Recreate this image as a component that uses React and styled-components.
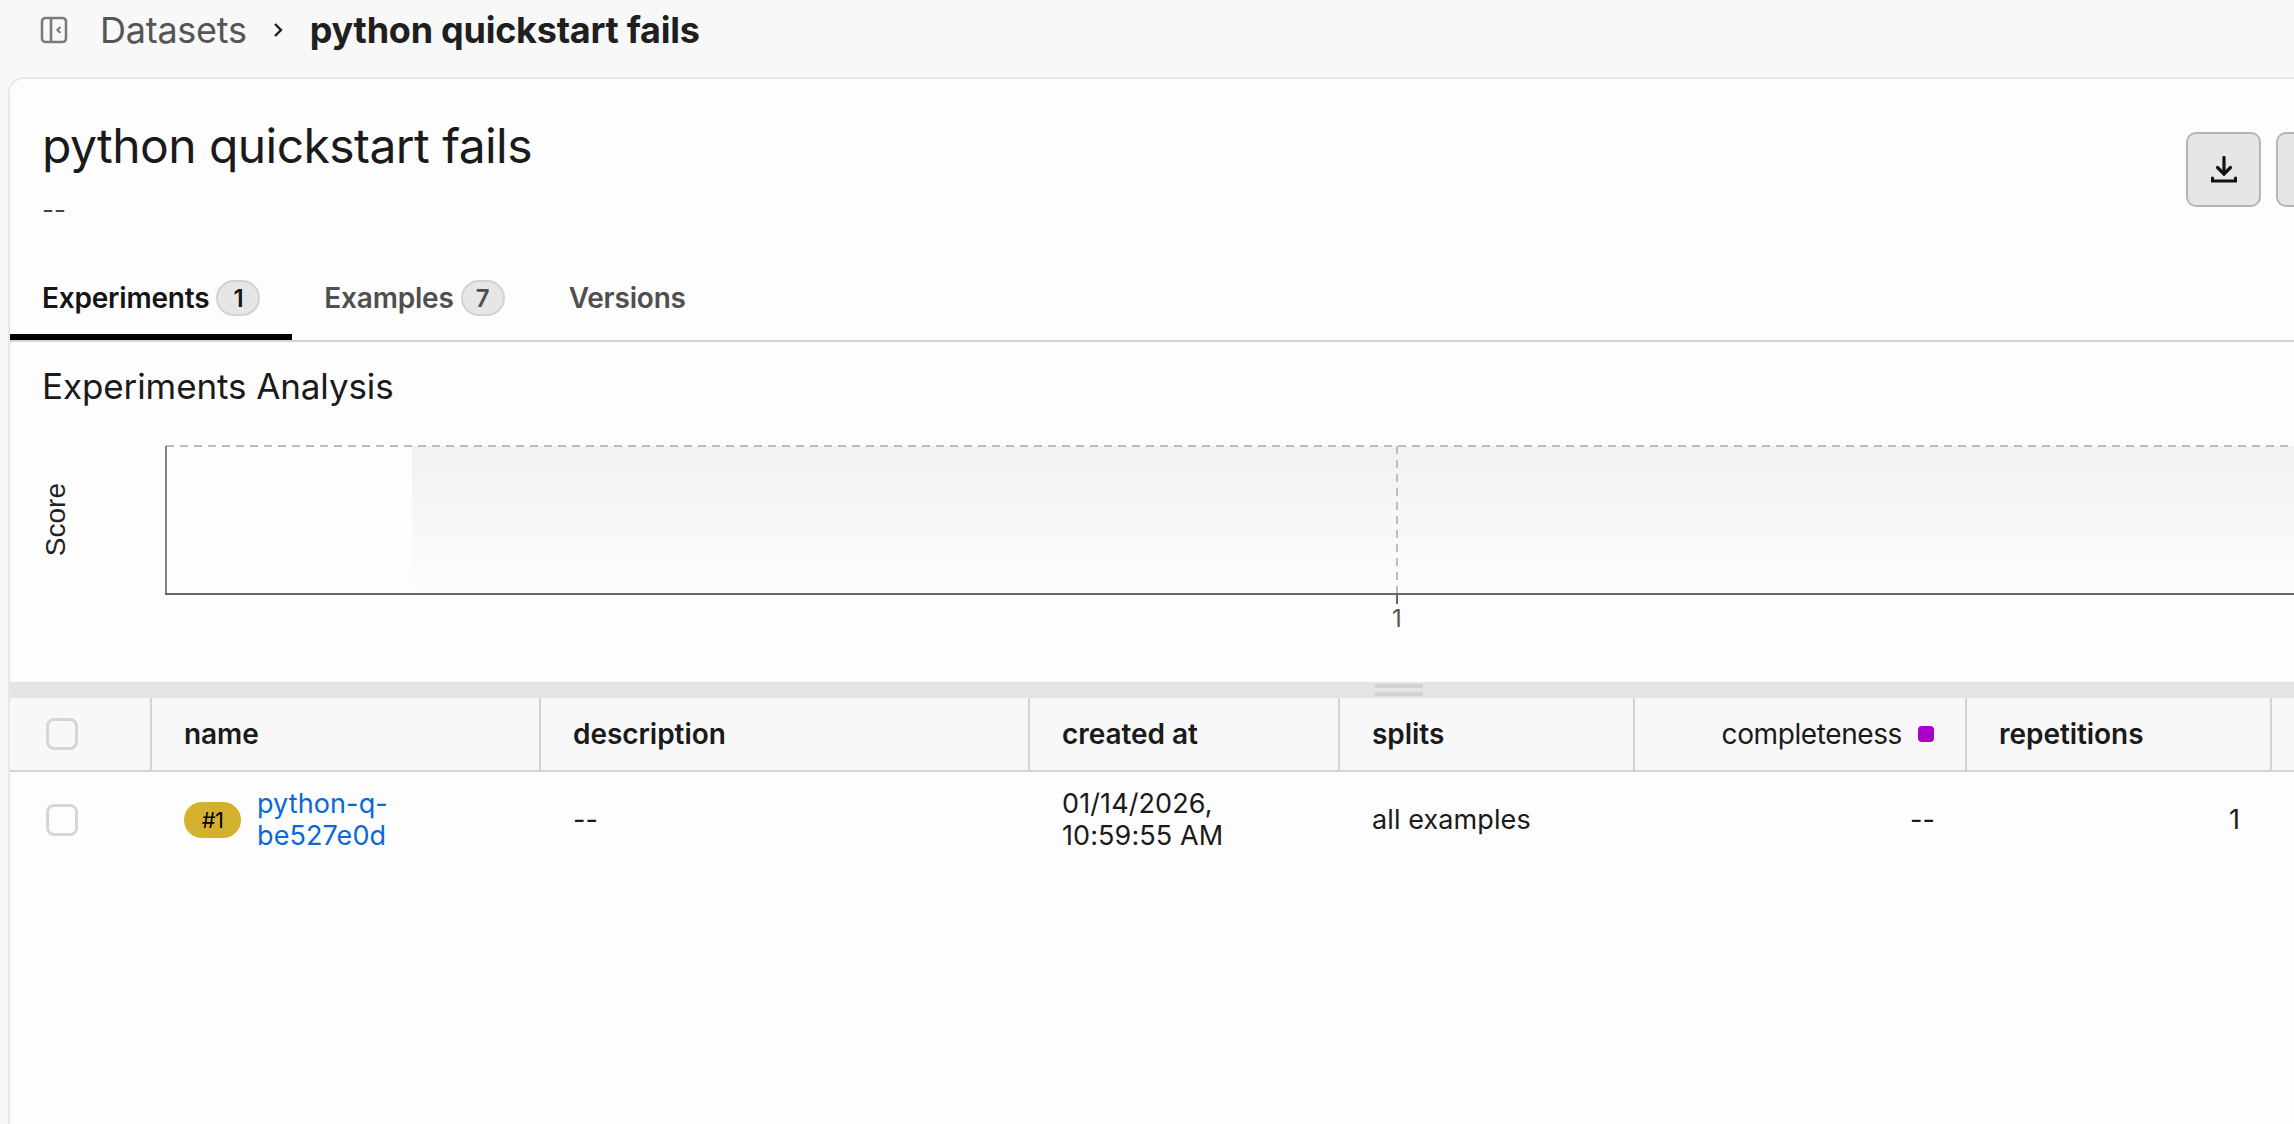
import React from 'react';
import styled, { createGlobalStyle } from 'styled-components';

const GlobalStyle = createGlobalStyle`
  html, body {
    margin: 0;
    height: 100%;
    overflow: hidden;
    background: #f8f8f8;
    font-family: Inter, "Liberation Sans", sans-serif;
    color: #1a1a1a;
  }
`;

const Page = styled.div`
  display: flex;
  flex-direction: column;
  width: 2294px;
  height: 1124px;
  overflow: hidden;
`;

const TopBar = styled.div`
  display: flex;
  align-items: center;
  padding: 0 0 17px 40px;
  box-sizing: border-box;
  flex: none;
  height: 77px;
`;

const Crumb = styled.span`
  font-size: 36px;
  font-weight: ${p => (p.$current ? 700 : 400)};
  color: ${p => (p.$current ? '#1f1f1f' : '#555')};
  letter-spacing: -0.25px;
`;

const CrumbIcon = styled.svg`
  width: 28px;
  height: 28px;
  margin-right: 32px;
`;

const Chevron = styled.svg`
  width: 20px;
  height: 20px;
  margin: 0 22px 0 21px;
`;

const Card = styled.div`
  flex: 1;
  margin-left: 8px;
  width: 2400px;
  background: #fdfdfd;
  border: 2px solid #e8e8e8;
  border-bottom: 0;
  border-radius: 16px 0 0 0;
  display: flex;
  flex-direction: column;
  min-height: 0;
`;

const Header = styled.div`
  display: flex;
  justify-content: space-between;
  padding: 39px 0 0 32px;
  height: 169px;
  box-sizing: border-box;
  flex: none;
`;

const Title = styled.h1`
  margin: 0;
  font-size: 48px;
  line-height: 56px;
  font-weight: 400;
  letter-spacing: -0.56px;
`;

const Subtitle = styled.div`
  margin-top: 20px;
  font-size: 26px;
  line-height: 32px;
  color: #444;
`;

const Actions = styled.div`
  display: flex;
  gap: 15px;
  margin: 14px 0 0 0;
  width: 224px;
`;

const IconButton = styled.button`
  width: 75px;
  height: 75px;
  padding: 0;
  background: #e6e6e6;
  border: 2px solid #b5b5b5;
  border-radius: 10px;
  display: flex;
  align-items: center;
  justify-content: center;
  flex: none;
`;

const Tabs = styled.div`
  display: flex;
  height: 94px;
  flex: none;
  border-bottom: 2px solid #d4d4d4;
  box-sizing: border-box;
`;

const Tab = styled.div`
  display: flex;
  align-items: center;
  gap: 7px;
  padding: 14px 32px 0;
  height: 92px;
  box-sizing: border-box;
  font-size: 28px;
  font-weight: 600;
  letter-spacing: -0.2px;
  color: ${p => (p.$active ? '#151515' : '#4f4f4f')};
  border-bottom: 6px solid ${p => (p.$active ? '#000' : 'transparent')};
`;

const Count = styled.span`
  display: inline-flex;
  align-items: center;
  justify-content: center;
  width: 44px;
  height: 36px;
  box-sizing: border-box;
  border-radius: 18px;
  background: #e6e6e6;
  border: 2px solid #d2d2d2;
  font-size: 24px;
  font-weight: 600;
`;

const Analysis = styled.div`
  padding: 23px 0 0 32px;
  height: 340px;
  box-sizing: border-box;
  flex: none;
`;

const SectionTitle = styled.h2`
  margin: 0;
  font-size: 35px;
  line-height: 42px;
  font-weight: 400;
  letter-spacing: -0.1px;
`;

const ChartRow = styled.div`
  display: flex;
  margin-top: 38px;
`;

const AxisLabelBox = styled.div`
  width: 123px;
  height: 149px;
  flex: none;
  display: flex;
  align-items: center;
`;

const AxisLabel = styled.span`
  writing-mode: vertical-rl;
  transform: rotate(180deg);
  font-family: "Liberation Sans", Arial, sans-serif;
  font-size: 28px;
  color: #222;
  margin-left: -2px;
`;

const Plot = styled.svg`
  display: block;
  flex: none;
`;

const Divider = styled.div`
  height: 16px;
  flex: none;
  background: #e5e5e5;
  display: flex;
  flex-direction: column;
  align-items: center;
  gap: 4px;
  padding: 2px 0 0 378px;
  box-sizing: border-box;
`;

const DividerLine = styled.div`
  width: 48px;
  height: 4px;
  border-radius: 1px;
  background: #d2d2d2;
`;

const tableColumns = '142px 389px 489px 310px 295px 332px 305px 200px';

const HeadRow = styled.div`
  display: grid;
  grid-template-columns: ${tableColumns};
  height: 74px;
  flex: none;
  background: #f8f8f8;
  border-bottom: 2px solid #d4d4d4;
  box-sizing: border-box;
`;

const HeadCell = styled.div`
  display: flex;
  align-items: center;
  justify-content: ${p => (p.$end ? 'flex-end' : 'flex-start')};
  gap: 16px;
  padding: 0 32px;
  box-sizing: border-box;
  border-right: 2px solid #d4d4d4;
  font-size: 28px;
  font-weight: ${p => (p.$light ? 400 : 600)};
  letter-spacing: ${p => (p.$light ? '-0.4px' : '-0.05px')};
  color: #1a1a1a;
`;

const BodyRow = styled.div`
  display: grid;
  grid-template-columns: ${tableColumns};
  height: 96px;
  flex: none;
`;

const BodyCell = styled.div`
  display: flex;
  align-items: center;
  justify-content: ${p => (p.$end ? 'flex-end' : 'flex-start')};
  padding: 0 32px;
  box-sizing: border-box;
  font-size: 27px;
  line-height: 32px;
  color: #1a1a1a;
  letter-spacing: 0.1px;
`;

const Checkbox = styled.div`
  width: 32px;
  height: 32px;
  box-sizing: border-box;
  margin-left: 4px;
  border: 3px solid #d6d6d6;
  border-radius: 8px;
`;

const Dot = styled.span`
  width: 16px;
  height: 16px;
  border-radius: 4px;
  background: #a800c8;
  flex: none;
  margin-right: -1px;
`;

const Badge = styled.span`
  display: inline-flex;
  align-items: center;
  justify-content: center;
  width: 57px;
  height: 36px;
  border-radius: 18px;
  background: #d4b02f;
  color: #000;
  font-size: 22px;
  letter-spacing: -0.6px;
  margin-right: 16px;
  flex: none;
`;

const NameLink = styled.a`
  color: #0a68d8;
  text-decoration: none;
`;

const PanelIcon = () => (
  <CrumbIcon viewBox="0 0 28 28" fill="none" stroke="#7b7b7b" strokeWidth="2.6">
    <rect x="2" y="2" width="24" height="24" rx="3.5" />
    <path d="M11 2v24" />
    <path d="M20.5 11l-3.2 3 3.2 3" strokeWidth="2" />
  </CrumbIcon>
);

const DownloadIcon = () => (
  <svg width="26" height="27" viewBox="0 0 26 27" fill="none" stroke="#111" strokeWidth="3.2" strokeLinecap="round">
    <path d="M13 1.5V18" />
    <path d="M6.5 11.5L13 18l6.5-6.5" />
    <path d="M1.5 22v3h23v-3" />
  </svg>
);

const App = () => {
  return (
    <Page>
      <GlobalStyle />
      <TopBar>
        <PanelIcon />
        <Crumb>Datasets</Crumb>
        <Chevron viewBox="0 0 20 20" fill="none" stroke="#1f1f1f" strokeWidth="2.4">
          <path d="M7 4l6 6-6 6" />
        </Chevron>
        <Crumb $current>python quickstart fails</Crumb>
      </TopBar>
      <Card>
        <Header>
          <div>
            <Title>python quickstart fails</Title>
            <Subtitle>--</Subtitle>
          </div>
          <Actions>
            <IconButton><DownloadIcon /></IconButton>
            <IconButton />
          </Actions>
        </Header>
        <Tabs>
          <Tab $active>Experiments <Count>1</Count></Tab>
          <Tab>Examples <Count>7</Count></Tab>
          <Tab>Versions</Tab>
        </Tabs>
        <Analysis>
          <SectionTitle>Experiments Analysis</SectionTitle>
          <ChartRow>
            <AxisLabelBox><AxisLabel>Score</AxisLabel></AxisLabelBox>
            <Plot width="2200" height="192" viewBox="0 0 2200 192">
              <defs>
                <linearGradient id="band" x1="0" y1="0" x2="0" y2="1">
                  <stop offset="0" stopColor="#f1f1f1" />
                  <stop offset="1" stopColor="#fdfdfd" />
                </linearGradient>
              </defs>
              <rect x="247" y="1" width="1953" height="148" fill="url(#band)" />
              <path d="M1 1H2200" stroke="#bdbdbd" strokeWidth="2" strokeDasharray="8 6" />
              <path d="M1232 1V149" stroke="#bdbdbd" strokeWidth="2" strokeDasharray="8 6" />
              <path d="M1 1V149" stroke="#808080" strokeWidth="2" />
              <path d="M0 149H2200" stroke="#666" strokeWidth="2" />
              <path d="M1232 149V159" stroke="#666" strokeWidth="2" />
              <text x="1232" y="182" textAnchor="middle" fontSize="24" fill="#555" fontFamily="Inter, sans-serif">1</text>
            </Plot>
          </ChartRow>
        </Analysis>
        <Divider><DividerLine /><DividerLine /></Divider>
        <HeadRow>
          <HeadCell><Checkbox /></HeadCell>
          <HeadCell>name</HeadCell>
          <HeadCell>description</HeadCell>
          <HeadCell>created at</HeadCell>
          <HeadCell>splits</HeadCell>
          <HeadCell $end $light>completeness <Dot /></HeadCell>
          <HeadCell>repetitions</HeadCell>
          <HeadCell />
        </HeadRow>
        <BodyRow>
          <BodyCell><Checkbox /></BodyCell>
          <BodyCell>
            <Badge>#1</Badge>
            <NameLink>python-q-<br />be527e0d</NameLink>
          </BodyCell>
          <BodyCell>--</BodyCell>
          <BodyCell>01/14/2026,<br />10:59:55 AM</BodyCell>
          <BodyCell>all examples</BodyCell>
          <BodyCell $end>--</BodyCell>
          <BodyCell $end>1</BodyCell>
          <BodyCell />
        </BodyRow>
      </Card>
    </Page>
  );
};

export default App;
